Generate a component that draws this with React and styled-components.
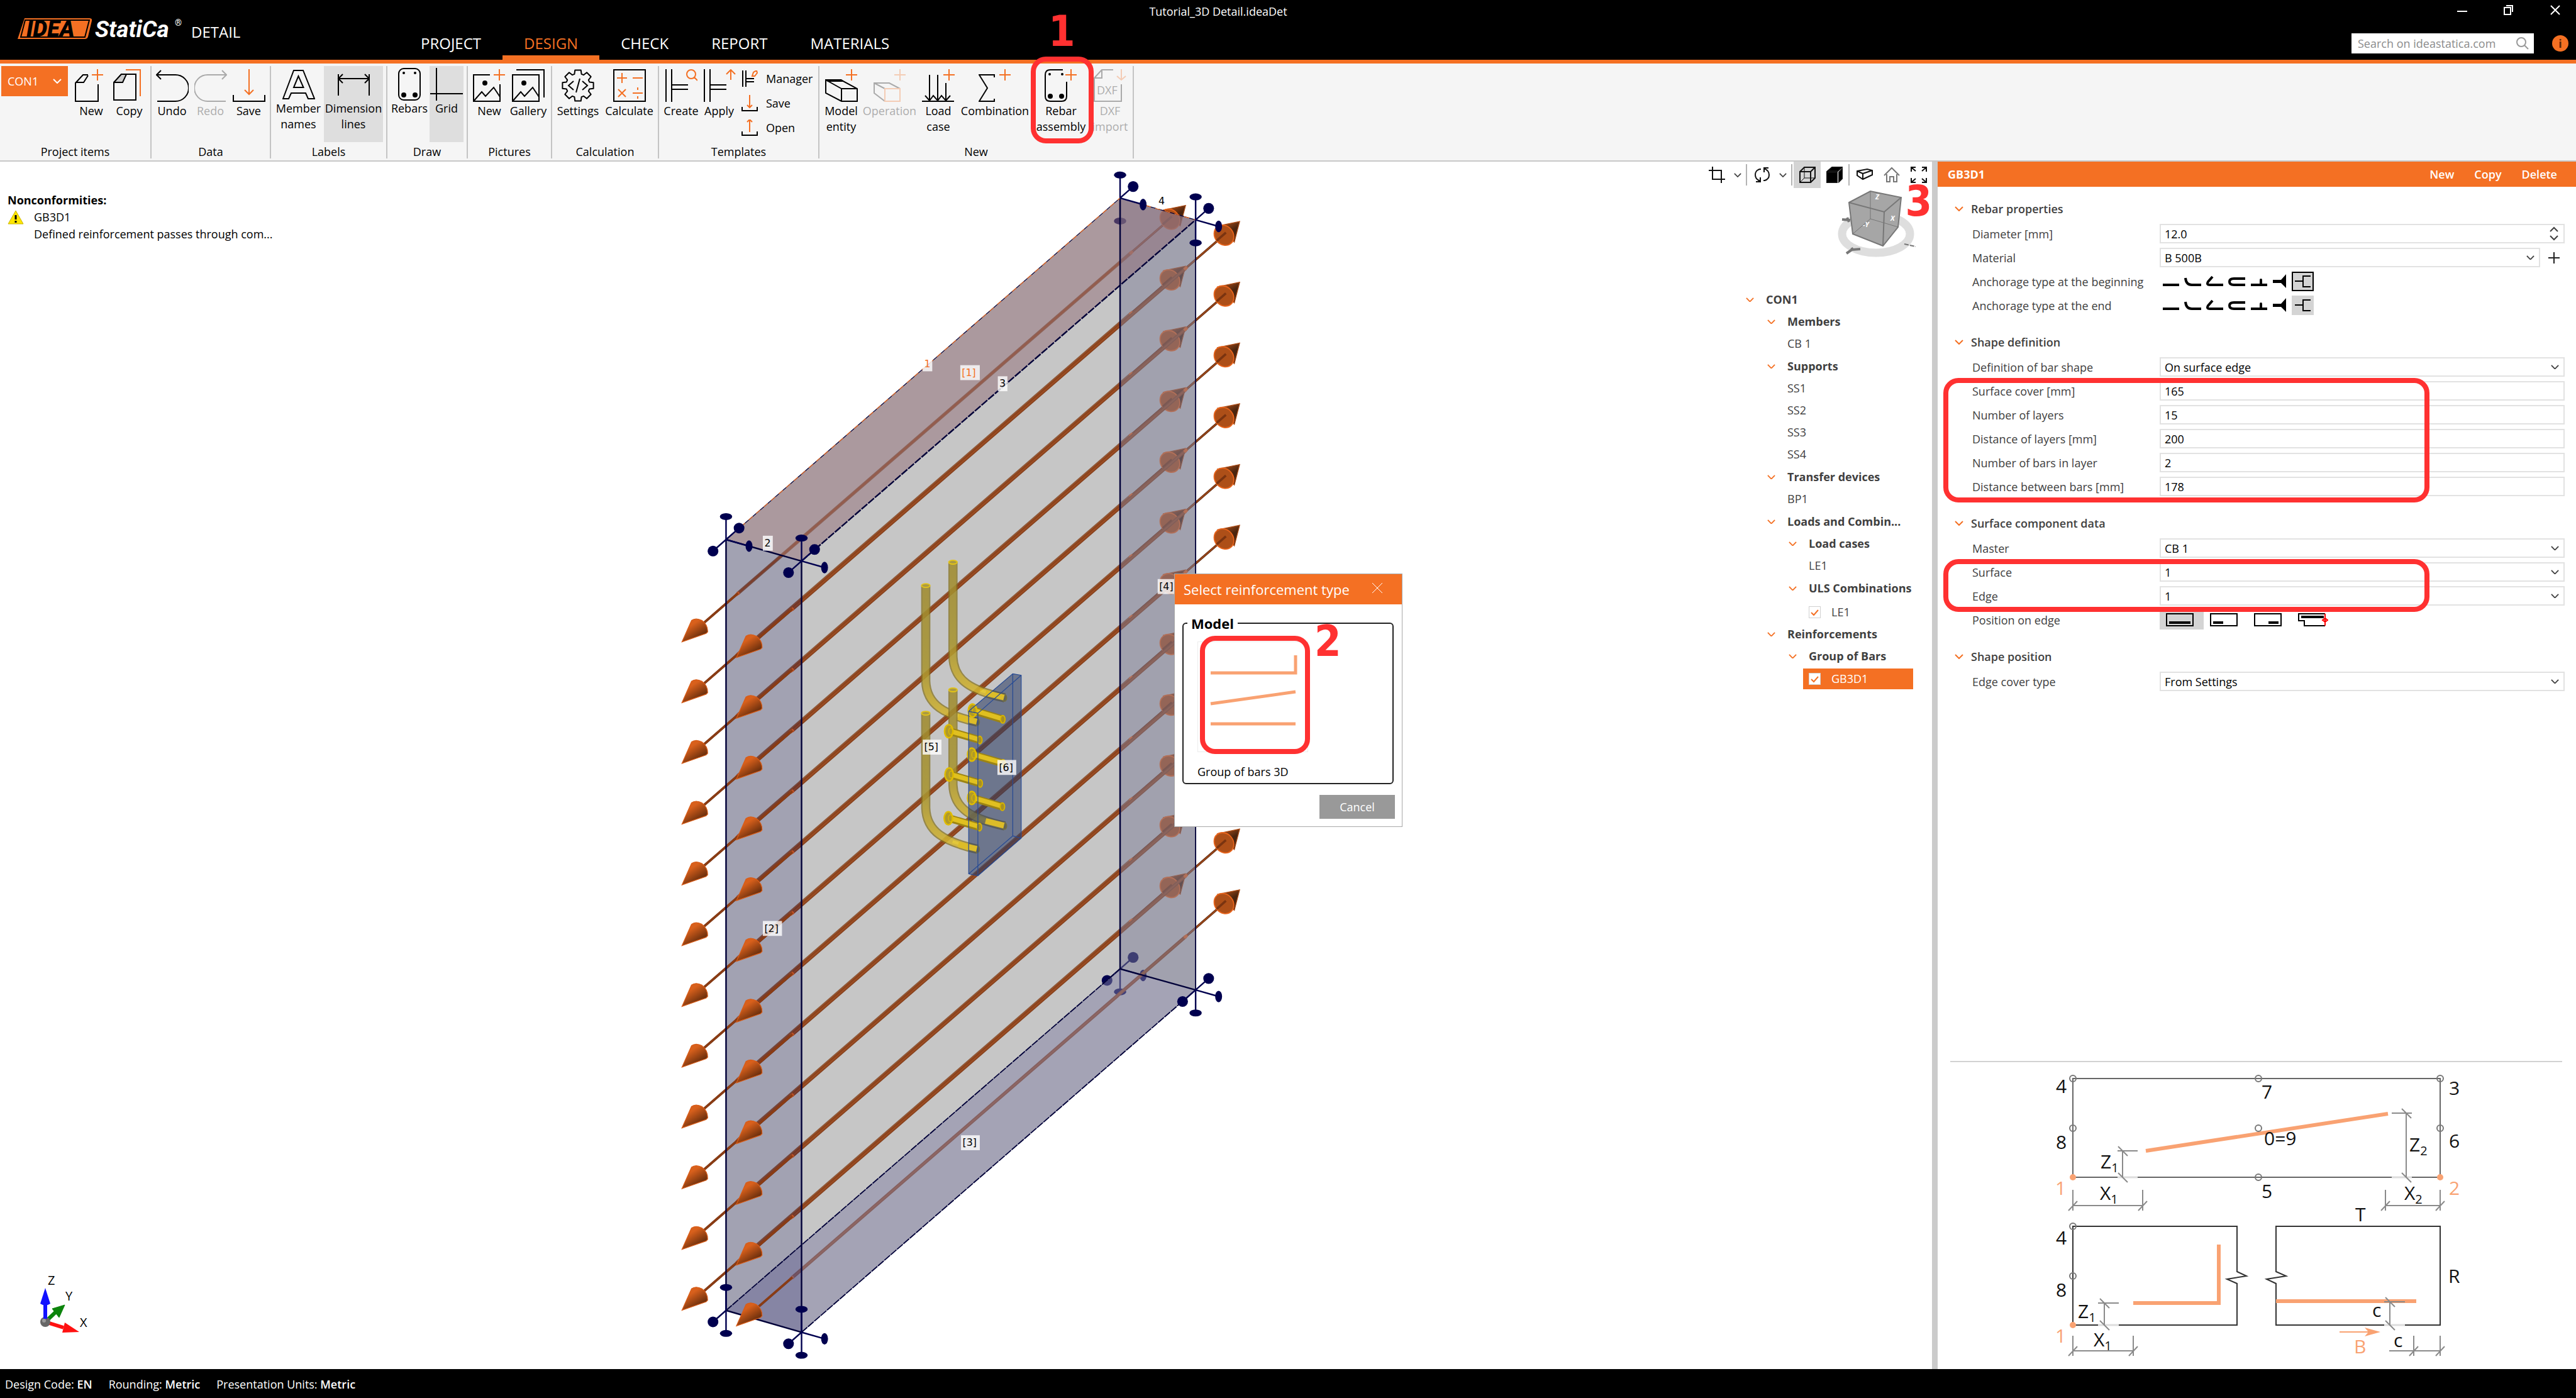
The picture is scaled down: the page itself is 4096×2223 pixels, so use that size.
import React from "react";
import styled, { createGlobalStyle } from "styled-components";

const orange = "#f47023";
const red = "#ff3131";
const peach = "#f9a272";

const GlobalStyle = createGlobalStyle`
  * {
    box-sizing: border-box;
  }
  html, body, #root {
    height: 100%;
    margin: 0;
  }
  body, button, input, select {
    font-family: "Open Sans", "Noto Sans", sans-serif;
    font-size: 18px;
    color: #000;
  }
  button {
    padding: 0;
    border: 0;
    background: none;
  }
  ul {
    list-style: none;
    margin: 0;
    padding: 0;
  }
`;

const Page = styled.div`
  display: flex;
  flex-direction: column;
  height: 100vh;
  background: #fff;
  overflow: hidden;
`;

/* ---------- header ---------- */

const Header = styled.header`
  display: grid;
  grid-template-columns: 635px 1fr auto;
  grid-template-rows: 36px 59px;
  height: 101px;
  flex: none;
  background: #000;
  color: #fff;
  border-bottom: 6px solid ${orange};
`;

const Brand = styled.div`
  grid-column: 1;
  grid-row: 1 / 3;
  display: flex;
  align-items: flex-start;
  padding: 20px 0 0 28px;
`;

const LogoSvg = styled.svg`
  display: block;
  width: 266px;
  height: 48px;
`;

const Module = styled.span`
  padding-left: 10px;
  line-height: 62px;
  font-size: 24px;
`;

const Title = styled.div`
  grid-column: 1 / 4;
  grid-row: 1;
  text-align: center;
  padding-right: 222px;
  line-height: 36px;
`;

const WindowButtons = styled.div`
  grid-column: 3;
  grid-row: 1;
  display: flex;
  justify-content: flex-end;
  padding-right: 4px;

  button {
    width: 58px;
    height: 36px;
    margin-left: 16px;
    color: #fff;
  }
`;

const Tabs = styled.nav`
  grid-column: 2;
  grid-row: 2;
  display: flex;
  align-items: flex-end;
`;

const Tab = styled.a`
  padding: 0 34px;
  height: 48px;
  line-height: 44px;
  font-size: 24px;
  text-decoration: none;
  color: ${(props) => (props.$active ? orange : "#fff")};
  border-bottom: 7px solid ${(props) => (props.$active ? orange : "transparent")};
`;

const HeaderTools = styled.div`
  grid-column: 3;
  grid-row: 2;
  display: flex;
  align-items: flex-start;
  padding: 17px 12px 0 0;
`;

const SearchBox = styled.label`
  display: flex;
  align-items: center;
  width: 290px;
  height: 32px;
  margin-right: 29px;
  padding: 0 8px 0 10px;
  background: #fff;

  input {
    flex: 1;
    min-width: 0;
    padding: 0;
    border: 0;
    outline: 0;
  }
  input::placeholder {
    color: #8c8c8c;
    opacity: 1;
  }
`;

const InfoButton = styled.button`
  width: 26px;
  height: 26px;
  margin-top: 3px;
  border-radius: 50%;
  background: ${orange};
  font-weight: 700;
  line-height: 26px;
  color: #5c2408;
`;

/* ---------- ribbon ---------- */

const Ribbon = styled.div`
  display: flex;
  height: 156px;
  flex: none;
  padding: 4px 0 3px;
  background: #f5f5f5;
  border-bottom: 2px solid #c8c8c8;
`;

const Group = styled.section`
  display: flex;
  flex-direction: column;
  width: ${(props) => props.$width}px;
  border-right: 2px solid #c4c4c4;
`;

const GroupBody = styled.div`
  display: flex;
  flex: 1;
  padding: 0 0 0 ${(props) => props.$pad}px;
`;

const GroupName = styled.div`
  line-height: 22px;
  text-align: center;
`;

const ItemPicker = styled.button`
  display: flex;
  align-items: center;
  justify-content: space-between;
  width: 106px;
  height: 48px;
  margin-right: 7px;
  padding: 0 10px;
  background: ${orange};
  color: #fff;
`;

const Tool = styled.button`
  position: relative;
  display: flex;
  flex-direction: column;
  align-items: center;
  width: ${(props) => props.$width}px;
  height: 121px;
  padding-top: ${(props) => (props.$toggle ? 3 : 5)}px;
  background: ${(props) => (props.$pressed ? "#dedede" : "none")};
  opacity: ${(props) => (props.disabled ? 0.3 : 1)};
  color: #000;
  line-height: 25px;

  svg {
    flex: none;
    margin-bottom: ${(props) => (props.$toggle ? 0 : 2)}px;
  }
`;

const SmallTools = styled.div`
  display: flex;
  flex-direction: column;
`;

const SmallTool = styled.button`
  display: flex;
  align-items: center;
  gap: 13px;
  height: 39px;
  padding: 0 0 0 4px;
`;

/* ---------- step marks ---------- */

const MarkBox = styled.span`
  position: absolute;
  border: 8px solid ${red};
  border-radius: 24px;
  pointer-events: none;
  z-index: 3;
`;

const ToolMark = styled(MarkBox)`
  top: -15px;
  left: 0;
  width: 100px;
  height: 138px;
`;

const TileMark = styled(MarkBox)`
  inset: -10px -4px -4px 3px;
`;

const RowsMark = styled(MarkBox)`
  top: -5px;
  bottom: -10px;
  left: -46px;
  width: 773px;
`;

const Step = styled.span`
  position: absolute;
  z-index: 3;
  color: ${red};
  font-family: "DejaVu Sans Condensed", "DejaVu Sans", sans-serif;
  font-weight: 700;
  font-size: 68px;
  line-height: 70px;
  pointer-events: none;
`;

const ToolStep = styled(Step)`
  top: -90px;
  left: 28px;
`;

const TileStep = styled(Step)`
  top: -36px;
  left: 185px;
`;

const ViewStep = styled(Step)`
  top: 28px;
  right: 0;
`;

/* ---------- 3D view ---------- */

const Main = styled.main`
  display: flex;
  flex: 1;
  min-height: 0;
`;

const Viewport = styled.section`
  position: relative;
  display: flex;
  justify-content: space-between;
  flex: 1;
  min-width: 0;
  overflow: hidden;
`;

const Scene = styled.svg`
  position: absolute;
  inset: 0;
  width: 100%;
  height: 100%;
`;

const AxisSvg = styled.svg`
  position: absolute;
  left: 50px;
  bottom: 40px;
`;

const Messages = styled.div`
  position: relative;
  padding: 48px 0 0 12px;
  line-height: 27px;
`;

const MessageTitle = styled.div`
  font-weight: 700;
`;

const Message = styled.div`
  display: grid;
  grid-template-columns: 42px auto;
  align-items: center;

  p {
    grid-column: 2;
    margin: 0;
  }
`;

const Side = styled.div`
  position: relative;
  display: flex;
  flex-direction: column;
  align-items: flex-end;
`;

const ViewTools = styled.div`
  display: flex;
  align-items: center;
  height: 42px;
`;

const ViewTool = styled.button`
  display: grid;
  place-items: center;
  width: ${(props) => (props.$narrow ? 24 : 43)}px;
  height: 42px;
  background: ${(props) => (props.$pressed ? "#d4d4d4" : "none")};
`;

const Divider = styled.span`
  width: 2px;
  height: 34px;
  margin: 0 2px 0 1px;
  background: #b4b4b4;
`;

const CubeSvg = styled.svg`
  display: block;
  margin: 0 22px 50px 0;
`;

const Tree = styled.ul`
  width: 272px;
  margin-right: 30px;
  color: #404040;
  line-height: 35px;
`;

const Branch = styled.ul`
  padding-left: 34px;
  padding-bottom: ${(props) => (props.$flat ? 1 : 0)}px;
`;

const TreeName = styled.div`
  display: flex;
  align-items: center;
  gap: 19px;
  height: 35px;
  padding-left: ${(props) => (props.$leaf ? 4 : 6)}px;
  font-weight: ${(props) => (props.$leaf ? 400 : 700)};
  white-space: nowrap;
`;

const TreeRoot = styled(TreeName)`
  margin-left: -28px;
  padding-left: 34px;
`;

const CheckRow = styled.label`
  display: flex;
  align-items: center;
  gap: 17px;
  height: 33px;
  margin: ${(props) => (props.$selected ? "2px 0 0 -5px" : "4px 0 1px")};
  padding-left: ${(props) => (props.$selected ? 9 : 4)}px;
  background: ${(props) => (props.$selected ? orange : "none")};
  color: ${(props) => (props.$selected ? "#fff" : "inherit")};
`;

const Tick = styled.span`
  display: grid;

  input, svg {
    grid-area: 1 / 1;
    width: 19px;
    height: 19px;
    margin: 0;
  }
  input {
    appearance: none;
    background: #fff;
    border: 1px solid #d0d0d0;
  }
  svg {
    pointer-events: none;
  }
`;

/* ---------- dialog ---------- */

const Dialog = styled.div`
  position: absolute;
  top: 655px;
  left: 1867px;
  width: 363px;
  border: 1px solid #a8a8a8;
  background: #fff;
`;

const DialogHead = styled.div`
  display: flex;
  align-items: center;
  justify-content: space-between;
  height: 48px;
  padding: 0 30px 0 14px;
  background: ${orange};
  color: #fff;
  font-size: 22px;
`;

const DialogGroup = styled.fieldset`
  height: 268px;
  margin: 18px 13px 0 12px;
  padding: 17px 0 0 22px;
  border: 2px solid #222;
  border-radius: 6px;

  legend {
    margin-left: -16px;
    padding: 0 6px;
    font-size: 22px;
    font-weight: 700;
    line-height: 24px;
  }
`;

const Tile = styled.button`
  position: relative;
  display: block;
  width: 176px;
  height: 176px;
  border: 1px solid #ececec;
`;

const TileName = styled.div`
  padding-top: 18px;
  line-height: 26px;
`;

const Cancel = styled.button`
  display: block;
  width: 120px;
  height: 38px;
  margin: 17px 11px 12px auto;
  background: #999;
  color: #fff;
`;

/* ---------- property panel ---------- */

const Panel = styled.aside`
  display: flex;
  flex-direction: column;
  width: 1024px;
  flex: none;
  border-left: 9px solid #cbcbcb;
`;

const PanelHead = styled.div`
  display: flex;
  align-items: center;
  gap: 32px;
  height: 40px;
  padding: 0 30px 0 16px;
  background: ${orange};
  color: #fff;

  strong {
    flex: 1;
    font-weight: 700;
  }
  button {
    color: #fff;
    font-weight: 600;
  }
`;

const PanelBody = styled.div`
  flex: 1;
  padding: 20px 18px 0 55px;
  color: #404040;
`;

const Section = styled.section`
  padding-bottom: 28px;

  h2 {
    display: flex;
    align-items: center;
    gap: 12px;
    height: 30px;
    margin: 0 0 9px -28px;
    font-size: 18px;
    font-weight: 600;
  }
`;

const Rows = styled.div`
  position: relative;
  display: grid;
  gap: 7px;

  & + & {
    margin-top: 7px;
  }
`;

const Row = styled.div`
  display: grid;
  grid-template-columns: 298px 1fr;
  align-items: center;
  height: 31px;
`;

const Control = styled.div`
  display: flex;
  align-items: center;
  height: 31px;
`;

const Field = styled.span`
  display: grid;
  flex: 1;
  align-items: center;

  input, select {
    grid-area: 1 / 1;
    appearance: none;
    width: 100%;
    height: 31px;
    padding: 0 6px;
    border: 2px solid #e2e2e2;
    border-radius: 0;
    background: #fff;
  }
  svg {
    grid-area: 1 / 1;
    justify-self: end;
    margin-right: 9px;
    pointer-events: none;
  }
`;

const AddButton = styled.button`
  display: grid;
  place-items: center;
  width: 35px;
  margin-left: 4px;
`;

const Option = styled.button`
  display: grid;
  place-items: center;
  width: 35px;
  height: 31px;
  background: ${(props) => (props.$pressed ? "#d4d4d4" : "none")};
  border: ${(props) => (props.$focused ? "2px solid #000" : "0")};
`;

const PositionOption = styled(Option)`
  width: 70px;
  justify-items: start;
  padding-left: 10px;
`;

const Figure = styled.figure`
  display: flex;
  justify-content: center;
  margin: 0 22px 0 20px;
  border-top: 2px solid #d2d2d2;
`;

/* ---------- status bar ---------- */

const Status = styled.footer`
  display: flex;
  align-items: center;
  gap: 26px;
  height: 46px;
  flex: none;
  padding: 2px 8px 0;
  background: #000;
  color: #fff;

  b {
    font-weight: 600;
  }
`;

/* ---------- icons ---------- */

function Chevron({ color = "#404040", size = 14 }) {
  return (
    <svg width={size} height={size / 2 + 1} viewBox="0 0 14 8" fill="none" stroke={color} strokeWidth="2">
      <path d="M1 1l6 6 6-6" />
    </svg>
  );
}

const Plus = ({ x = 42, y = 9 }) => <path d={`M${x - 9} ${y}h18M${x} ${y - 9}v18`} stroke={orange} />;

const gear = () => {
  const pts = [];
  for (let i = 0; i < 8; i++) {
    [[-0.3, 19], [-0.19, 25], [0.19, 25], [0.3, 19]].forEach(([d, r]) => {
      const a = (i * Math.PI) / 4 + d;
      pts.push(`${(26 + r * Math.sin(a)).toFixed(1)} ${(26 - r * Math.cos(a)).toFixed(1)}`);
    });
  }
  return `M${pts.join("L")}Z`;
};

const mountain = "M1 51L14 36L20 43L33 29L43 44";

const toolIcons = {
  page: (
    <>
      <path d="M37 24V51H1V22L13 9H21M21 10L14 21H1" />
      <Plus x={36} />
    </>
  ),
  copy: (
    <>
      <path d="M1 22L13 8H36V49H1ZM13 8V21H1" />
      <path d="M13 8H21L15 21H1Z" fill="#ccc" />
      <path d="M20 1H43V43" stroke={orange} />
    </>
  ),
  undo: <path d="M8 2L1 9L8 16M1 9H31A21 21 0 0 1 31 51H2" />,
  redo: <path d="M44 2L51 9L44 16M51 9H21A21 21 0 0 0 21 51H50" />,
  save: (
    <>
      <path d="M26 0V40M19 33L26 40L33 33" stroke={orange} />
      <path d="M1 41V51H51V41" />
    </>
  ),
  names: <path d="M1 49L18 4H33L51 49H41L37 40H14L10 49ZM25.500 13L18 31H33.500Z" />,
  dims: <path d="M2 10V44M51 10V44M2 17H51M9 10L2 17L9 24M44 10L51 17L44 24" />,
  rebars: (
    <>
      <rect x="9" y="1" width="34" height="50" rx="8" />
      <g fill="#000" stroke="none">
        <circle cx="17" cy="8" r="2" />
        <circle cx="35" cy="8" r="2" />
        <circle cx="17" cy="43" r="4" />
        <circle cx="35" cy="43" r="4" />
      </g>
    </>
  ),
  grid: <path d="M10 0V52M0 41H52" />,
  picture: (
    <>
      <path d="M27 9H1V51H43V24" />
      <path d={mountain} />
      <circle cx="19" cy="22" r="3" fill="#000" />
      <Plus />
    </>
  ),
  gallery: (
    <>
      <path d="M1 9H43V51H1ZM7 1H51V45" />
      <path d={mountain} />
      <circle cx="19" cy="22" r="3" fill="#000" />
    </>
  ),
  settings: (
    <>
      <path d={gear()} strokeLinejoin="round" />
      <path d="M19 19L11 26L19 33M33 19L41 26L33 33M29 15L23 37" />
    </>
  ),
  calculate: (
    <>
      <rect x="1" y="1" width="50" height="50" />
      <path d="M6 14H22M14 6V22M31 14H47M8 32L20 44M20 32L8 44M31 38H47M39 29V33M39 43V47" stroke={orange} />
    </>
  ),
  create: (
    <>
      <path d="M2 0V52M11 0V52M11 25H37M11 32H37" />
      <path d="M47 13L52 18M42 1A7 7 0 1 0 42 15A7 7 0 1 0 42 1" stroke={orange} />
    </>
  ),
  apply: (
    <>
      <path d="M2 0V52M11 0V52M11 25H37M11 32H37" />
      <path d="M44 17V1M37 8L44 1L51 8" stroke={orange} />
    </>
  ),
  entity: (
    <>
      <path d="M1 17H25L51 31V51H26L1 38ZM26 51V31H51M26 31L1 17" />
      <path d="M1 17H25L28 19H5Z" fill="#777" />
      <Plus />
    </>
  ),
  operation: (
    <>
      <path d="M18 51L1 38V22H25L42 31M18 31L1 22" />
      <path d="M18 31H42V51H18Z" stroke={orange} />
      <Plus />
    </>
  ),
  load: (
    <>
      <path d="M12 9V49M25 9V49M38 22V49M5 42L12 50L18 42L25 50L31 42L38 50L45 42M0 51H51" />
      <Plus x={43} />
    </>
  ),
  sum: (
    <>
      <path d="M25 13V9H1L14 30L1 51H25V47" />
      <Plus />
    </>
  ),
  rebar: (
    <>
      <path d="M29 1H9Q1 1 1 9V43Q1 51 9 51H27Q35 51 35 43V20" />
      <g fill="#000" stroke="none">
        <circle cx="8" cy="8" r="2" />
        <circle cx="28" cy="8" r="2" />
        <circle cx="9" cy="43" r="4" />
        <circle cx="27" cy="43" r="4" />
      </g>
      <Plus />
    </>
  ),
  dxf: (
    <>
      <path d="M31 1H13L1 14V51H44V24M13 1V14H1" />
      <path d="M44 0V17M37 11L44 17L51 11" stroke={orange} />
      <text x="5" y="40" fontSize="18" fill="#000" stroke="none">DXF</text>
    </>
  ),
};

function ToolIcon({ name }) {
  return (
    <svg width="52" height="52" viewBox="0 0 52 52" fill="none" stroke="#000" strokeWidth="2">
      {toolIcons[name]}
    </svg>
  );
}

const smallIcons = {
  manager: (
    <>
      <path d="M2 0V26M7 0V26M7 13H20M7 18H20" />
      <path d="M17 9L19 3L24 0L25 4L21 9Z" stroke={orange} />
    </>
  ),
  save: (
    <>
      <path d="M13 0V20M9 16L13 20L17 16" stroke={orange} />
      <path d="M1 19V25H25V19" />
    </>
  ),
  open: (
    <>
      <path d="M13 20V0M9 4L13 0L17 4" stroke={orange} />
      <path d="M1 19V25H25V19" />
    </>
  ),
};

function SmallIcon({ name }) {
  return (
    <svg width="26" height="26" viewBox="0 0 26 26" fill="none" stroke="#000" strokeWidth="2">
      {smallIcons[name]}
    </svg>
  );
}

const viewIcons = {
  crop: <path d="M6 0V20H26M0 6H20V26" />,
  refresh: <path d="M3 24H10V17M10 23Q2 20 2 13Q2 6 9 4H11M23 2H16V9M16 3Q24 6 24 13Q24 20 17 22H15" />,
  wire: (
    <>
      <path d="M1 8H18V25H1ZM1 8L8 1H25V18L18 25M18 8L25 1" />
      <path d="M8 1V18H25M8 18L1 25" strokeWidth="1" />
    </>
  ),
  solid: (
    <>
      <path d="M1 9H17V25H1Z" fill="#000" />
      <path d="M2 7L9 1H25L18 7Z" fill="#000" />
      <path d="M20 24V9L25 4V19Z" fill="#000" />
    </>
  ),
  box: <path d="M1 7L17 4L25 6V13L10 20L1 14ZM10 20V11L1 7M10 11L25 6" />,
  home: <path d="M1 14L13 2L25 14M5 12V24H10V16H16V24H21V12" stroke="#777" />,
  expand: <path d="M1 8V1H8M18 1H25V8M25 18V25H18M8 25H1V18M1 1L8 7M25 1L18 7M25 25L18 19M1 25L8 19" />,
};

function ViewIcon({ name }) {
  return (
    <svg width="26" height="26" viewBox="0 0 26 26" fill="none" stroke="#111" strokeWidth="2">
      {viewIcons[name]}
    </svg>
  );
}

const anchorIcons = [
  <path d="M1 17H27" />,
  <path d="M2 6Q3 17 12 17H27" />,
  <path d="M10 4L3 12Q0 17 6 17H27" />,
  <path d="M27 7H9Q2 7 2 12T9 17H27" />,
  <>
    <path d="M1 17H27M17 17V10" />
    <circle cx="17" cy="9" r="2" fill="#000" stroke="none" />
  </>,
  <path d="M1 9H14L22 0V22L14 14H1Z" fill="#000" stroke="none" />,
  <path d="M1 11H14M26 3H14V20H26" strokeWidth="2" />,
];

const positionIcons = [
  <path d="M5 15H39" strokeWidth="4" />,
  <path d="M5 15H21" strokeWidth="4" />,
  <path d="M23 15H39" strokeWidth="4" />,
];

/* ---------- header parts ---------- */

function Logo() {
  return (
    <LogoSvg viewBox="0 0 266 48">
      <path d="M11 9H114Q119 9 118 13L112 38Q111 42 107 42H0Z" fill={orange} />
      <path d="M12 12H114L107 39H5Z" fill="none" stroke="#000" strokeWidth="2" />
      <g fontFamily="Roboto, sans-serif" fontStyle="italic">
        <text x="14" y="38" fontSize="36" fontWeight="900" fill="#000">IDEA</text>
        <text x="123" y="39" fontSize="37" fontWeight="700" fill="#fff">StatiCa</text>
      </g>
      <text x="250" y="21" fontSize="14" fill="#fff" fontFamily="Roboto, sans-serif">®</text>
    </LogoSvg>
  );
}

function TopBar() {
  const tabs = ["PROJECT", "DESIGN", "CHECK", "REPORT", "MATERIALS"];
  return (
    <Header>
      <Title>Tutorial_3D Detail.ideaDet</Title>
      <Brand>
        <Logo />
        <Module>DETAIL</Module>
      </Brand>
      <WindowButtons>
        <button aria-label="Minimize">
          <svg width="18" height="18" fill="none" stroke="#fff" strokeWidth="2"><path d="M1 11H17" /></svg>
        </button>
        <button aria-label="Restore">
          <svg width="18" height="18" fill="none" stroke="#fff" strokeWidth="2"><path d="M2 5H12V16H2ZM5 2H15V12" /></svg>
        </button>
        <button aria-label="Close">
          <svg width="18" height="18" fill="none" stroke="#fff" strokeWidth="2"><path d="M2 2L16 16M16 2L2 16" /></svg>
        </button>
      </WindowButtons>
      <Tabs>
        {tabs.map((name) => (
          <Tab key={name} href="#" $active={name === "DESIGN"}>{name}</Tab>
        ))}
      </Tabs>
      <HeaderTools>
        <SearchBox>
          <input type="search" aria-label="Search" placeholder="Search on ideastatica.com" />
          <svg width="20" height="20" fill="none" stroke="#999" strokeWidth="2">
            <circle cx="8" cy="8" r="7" />
            <path d="M13 13L19 19" />
          </svg>
        </SearchBox>
        <InfoButton>i</InfoButton>
      </HeaderTools>
    </Header>
  );
}

const ribbonGroups = [
  {
    name: "Project items", width: 241, pad: 2, picker: "CON1",
    tools: [["page", "New", 60], ["copy", "Copy", 61]],
  },
  {
    name: "Data", width: 190, pad: 2,
    tools: [["undo", "Undo", 61], ["redo", "Redo", 61, { disabled: true }], ["save", "Save", 61]],
  },
  {
    name: "Labels", width: 185, pad: 3,
    tools: [["names", "Member names", 81, { toggle: true }], ["dims", "Dimension lines", 94, { toggle: true, pressed: true }]],
  },
  {
    name: "Draw", width: 128, pad: 3,
    tools: [["rebars", "Rebars", 64, { toggle: true }], ["grid", "Grid", 54, { toggle: true, pressed: true }]],
  },
  {
    name: "Pictures", width: 134, pad: 3,
    tools: [["picture", "New", 62], ["gallery", "Gallery", 62]],
  },
  {
    name: "Calculation", width: 170, pad: 5,
    tools: [["settings", "Settings", 72], ["calculate", "Calculate", 91]],
  },
  {
    name: "Templates", width: 255, pad: 6, small: true,
    tools: [["create", "Create", 58], ["apply", "Apply", 63]],
  },
  {
    name: "New", width: 500, pad: 2,
    tools: [
      ["entity", "Model entity", 65], ["operation", "Operation", 89, { disabled: true }],
      ["load", "Load case", 66], ["sum", "Combination", 114],
      ["rebar", "Rebar assembly", 96, { step: "1" }], ["dxf", "DXF import", 60, { disabled: true }],
    ],
  },
];

function RibbonBar() {
  return (
    <Ribbon>
      {ribbonGroups.map((group) => (
        <Group key={group.name} $width={group.width}>
          <GroupBody $pad={group.pad}>
            {group.picker && (
              <ItemPicker>
                {group.picker} <Chevron color="#fff" />
              </ItemPicker>
            )}
            {group.tools.map(([icon, label, width, opts = {}]) => (
              <Tool key={label} $width={width} $toggle={opts.toggle} $pressed={opts.pressed} disabled={opts.disabled}>
                <ToolIcon name={icon} />
                {label.split(" ").map((word) => <span key={word}>{word}</span>)}
                {opts.step && <ToolMark />}
                {opts.step && <ToolStep>{opts.step}</ToolStep>}
              </Tool>
            ))}
            {group.small && (
              <SmallTools>
                <SmallTool><SmallIcon name="manager" />Manager</SmallTool>
                <SmallTool><SmallIcon name="save" />Save</SmallTool>
                <SmallTool><SmallIcon name="open" />Open</SmallTool>
              </SmallTools>
            )}
          </GroupBody>
          <GroupName>{group.name}</GroupName>
        </Group>
      ))}
    </Ribbon>
  );
}

/* ---------- model drawing ---------- */

const navy = "#00004f";
const layers = Array.from({ length: 12 }, (_, i) => i * 158.5);

// a support has a stem and a disc for each direction that it holds
const directions = {
  up: [0, -60, 16, 9],
  down: [0, 60, 16, 9],
  back: [34, -30, 14, 14],
  front: [-34, 30, 14, 14],
  side: [60, 17, 9, 15],
};

function Support({ x, y, dirs }) {
  return (
    <g stroke={navy} strokeWidth="4" fill={navy}>
      {dirs.split(" ").map((dir) => {
        const [dx, dy, rx, ry] = directions[dir];
        return (
          <g key={dir}>
            <path d={`M${x} ${y}l${dx} ${dy}`} />
            <ellipse cx={x + dx} cy={y + dy} rx={rx} ry={ry} stroke="none" />
          </g>
        );
      })}
    </g>
  );
}

function Bar({ x, y, back }) {
  // y is the height of the left tip; bars rise 0.8667 for each unit
  const at = (px) => `${px} ${(y - (px - x) * 0.8667).toFixed(1)}`;
  const inner = x + 145;
  const outer = x + 1172;
  return (
    <g>
      <path d={`M${at(x + 40)}L${at(inner)}M${at(outer)}L${at(x + 1280)}`} stroke="#6a2f12" strokeWidth="6" />
      <path d={`M${at(x + 40)}L${at(inner)}M${at(outer)}L${at(x + 1280)}`} stroke="#b0521c" strokeWidth="2" />
      <path d={`M${at(inner)}L${at(outer)}`} stroke={back ? "#8c5a3c" : "#86401c"} strokeWidth="9" />
      <path d={`M${at(inner)}L${at(outer)}`} stroke="#9a4c22" strokeWidth="4" />
      <path d={`M${at(inner - 4)}L${at(inner + 4)}M${at(outer - 4)}L${at(outer + 4)}`} stroke="#e8641c" strokeWidth="8" />
    </g>
  );
}

function LeftCone({ x, y }) {
  return (
    <path
      transform={`translate(${x} ${y})`}
      d="M0 0L25 -56Q36 -64 52 -56Q68 -44 67 -26L63 -22Z"
      fill="url(#cone)"
      stroke="#d85c18"
      strokeWidth="2"
    />
  );
}

function RightCone({ x, y }) {
  return (
    <g transform={`translate(${x} ${y})`}>
      <path d="M0 0L-58 12L-14 54Z" fill="url(#tip)" stroke="#b0501a" strokeWidth="2" />
      <ellipse cx="-41" cy="36" rx="24" ry="28" transform="rotate(-40 -41 36)" fill="#ad4f18" stroke="#e8641c" strokeWidth="3" />
      <path d="M-60 50L-36 29" stroke="#7a3410" strokeWidth="6" />
    </g>
  );
}

const hooks = [[750, 1041, 247, 1395], [679, 1102, 249, 1458], [750, 1374, 248, 1729], [679, 1435, 247, 1790]];
const studs = [[803, 1428, 77], [741, 1482, 79], [801, 1543, 80], [742, 1595, 79], [801, 1656, 78], [740, 1709, 79]];

function Hook({ x, y, straight, end }) {
  const bend = y + straight;
  const d = `M${x} ${y}V${bend}C${x + 2} ${bend + 62} ${x + 48} ${bend + 88} ${x + 135} ${end}`;
  return (
    <g fill="none">
      <path d={d} stroke="#857220" strokeWidth="24" opacity="0.85" />
      <path d={d} stroke="url(#steel)" strokeWidth="17" />
      <path d={`M${x + 70} ${end - 20}L${x + 133} ${end - 1}`} stroke="#e6c828" strokeWidth="8" />
      <ellipse cx={x} cy={y} rx="11" ry="5" fill="#a89430" stroke="#e8c400" strokeWidth="3" />
      <ellipse cx={x + 134} cy={end} rx="6" ry="9" fill="#a89430" stroke="#d8b400" strokeWidth="3" />
    </g>
  );
}

function Stud({ x, y, length }) {
  return (
    <g>
      <path d={`M${x} ${y}l${length} 23`} stroke="#9c8414" strokeWidth="20" />
      <path d={`M${x} ${y - 1}l${length} 23`} stroke="#e0c020" strokeWidth="12" />
      <ellipse cx={x - 2} cy={y} rx="11" ry="17" fill="#b09a28" stroke="#e0bc00" strokeWidth="4" />
      <ellipse cx={x + 3} cy={y} rx="5" ry="9" fill="none" stroke="#e0bc00" strokeWidth="2" />
      <ellipse cx={x + length} cy={y + 23} rx="6" ry="10" fill="#a89020" stroke="#d8b400" strokeWidth="3" />
    </g>
  );
}

const sceneLabels = [
  ["1", 671, 504, 25, orange], ["[1]", 769, 527, 51, orange], ["3", 867, 556, 25], ["2", 254, 972, 26],
  ["4", 1282, 80, 25], ["[4]", 1284, 1085, 50], ["[5]", 671, 1504, 49], ["[6]", 866, 1557, 49],
  ["[2]", 254, 1977, 50], ["[3]", 771, 2536, 49],
];

function Model() {
  return (
    <Scene viewBox="-1736 -4 5040 3150" fill="none">
      <defs>
        <linearGradient id="cone" x1="0" y1="0" x2="0.7" y2="1">
          <stop offset="0.35" stopColor="#d8601c" />
          <stop offset="1" stopColor="#4a2008" />
        </linearGradient>
        <linearGradient id="tip" x1="0" y1="0" x2="0.6" y2="1">
          <stop offset="0" stopColor="#c85a1c" />
          <stop offset="0.6" stopColor="#4a240e" />
        </linearGradient>
        <linearGradient id="steel" x1="0" y1="0" x2="0" y2="1">
          <stop offset="0" stopColor="#a08c30" />
          <stop offset="0.6" stopColor="#a89430" />
          <stop offset="1" stopColor="#d8b830" />
        </linearGradient>
      </defs>

      <path d="M158 982L1186 91L1383 148V2157L355 3050L158 2993Z" fill="#c6c6c6" />
      <g>
        {layers.map((dy) => <Bar key={dy} x={43} y={1249 + dy} back />)}
        {layers.map((dy) => <RightCone key={dy} x={1357} y={110 + dy} />)}
        <Support x={1186} y={91} dirs="down" />
        <Support x={1186} y={2102} dirs="back front down side" />
      </g>
      {layers.map((dy) => <Bar key={dy} x={185} y={1290 + dy} />)}

      <path d="M1186 91L1383 148V2157L1186 2102Z" fill="#7c7c96" opacity="0.5" />
      <path d="M158 2993L1186 2102L1383 2157L355 3050Z" fill="#8280a4" opacity="0.5" />
      <path d="M158 982L355 1038V3050L158 2993Z" fill="#000057" opacity="0.18" />
      <path d="M158 982L1186 91L1383 148L355 1038Z" fill="#906c76" opacity="0.5" />

      {layers.map((dy) => <path key={dy} d={`M83 ${1214 + dy}l106 -92`} stroke="#8a3c14" strokeWidth="6" />)}
      {layers.map((dy) => <path key={dy} d={`M225 ${1255 + dy}l106 -92`} stroke="#8a3c14" strokeWidth="6" />)}

      <g stroke="#000038" strokeWidth="4">
        <path d="M158 982V2993M355 1038V3050M1186 91V2102" />
        <path d="M1383 148V2157" strokeWidth="3" />
        <path d="M158 982L355 1038M158 2993L355 3050M1186 2102L1383 2157" />
        <path d="M158 2993L1186 2102M355 3050L1383 2157" strokeWidth="3" strokeDasharray="20 2" />
        <path d="M355 1038L1383 148" strokeDasharray="20 3" />
        <path d="M158 982L1186 91L1383 148" strokeWidth="2" />
        <path d="M158 982L1186 91L1383 148" stroke={orange} strokeWidth="2" strokeDasharray="14 12" />
      </g>

      {layers.map((dy) => <LeftCone key={dy} x={43} y={1249 + dy} />)}
      {layers.map((dy) => <LeftCone key={dy} x={185} y={1290 + dy} />)}
      {layers.map((dy) => <RightCone key={dy} x={1498} y={152 + dy} />)}

      <Support x={1186} y={91} dirs="up back side" />
      <Support x={1383} y={148} dirs="up down back side" />
      <Support x={158} y={982} dirs="up back front side" />
      <Support x={355} y={1038} dirs="up back front side" />
      <Support x={1383} y={2157} dirs="down back front side" />
      <Support x={158} y={2993} dirs="up down front" />
      <Support x={355} y={3050} dirs="up down front side" />

      <g opacity="0.88">
        {hooks.map(([x, y, straight, end]) => <Hook key={y} x={x} y={y} straight={straight} end={end} />)}
      </g>
      <path d="M791 1430L906 1332L928 1336V1761L815 1859L791 1854Z" fill="#2c3c64" opacity="0.58" />
      {studs.map(([x, y, length]) => <Stud key={y} x={x} y={y} length={length} />)}
      {hooks.map(([x, , , end]) => (
        <path key={end} d={`M${x + 85} ${end - 13}L${x + 133} ${end - 1}`} stroke="#dcbc28" strokeWidth="15" />
      ))}
      <path d="M791 1430L906 1332L928 1336V1761L815 1859L791 1854ZM791 1430L815 1435V1859M815 1435L928 1336M906 1332V1755L791 1854M906 1755L928 1761" stroke="#264a94" strokeWidth="2" />

      <g fontFamily="DejaVu Sans, sans-serif" fontSize="26">
        {sceneLabels.map(([text, x, y, width, color = "#000"]) => (
          <g key={text}>
            <rect x={x} y={y} width={width} height="39" fill="#fff" opacity="0.8" />
            <text x={x + 4} y={y + 28} fill={color}>{text}</text>
          </g>
        ))}
      </g>
    </Scene>
  );
}

function Axes() {
  return (
    <AxisSvg width="110" height="130" viewBox="50 2005 110 130" fontSize="20">
      <path d="M72 2100L90 2083" stroke="#0c840c" strokeWidth="6" />
      <path d="M103 2073L83 2079L94 2093Z" fill="#0c840c" stroke="#0c840c" />
      <path d="M72 2100L101 2109" stroke="#f11" strokeWidth="6" />
      <path d="M126 2116L103 2101L99 2117Z" fill="#f11" />
      <circle cx="72" cy="2100" r="8" fill="#666" />
      <circle cx="70" cy="2098" r="3" fill="#999" />
      <path d="M72 2095V2070" stroke="#11f" strokeWidth="6" />
      <path d="M72 2046L64 2071Q72 2076 80 2071Z" fill="#11f" />
      <text x="76" y="2041">Z</text>
      <text x="104" y="2066">Y</text>
      <text x="127" y="2108">X</text>
    </AxisSvg>
  );
}

function ViewCube() {
  return (
    <CubeSvg width="130" height="110" viewBox="0 0 130 110">
      <ellipse cx="63" cy="73" rx="54" ry="30" fill="none" stroke="#dedede" strokeWidth="13" />
      <g fill="#a6a6a6" stroke="#777" strokeWidth="2">
        <path d="M20 23L54 5L103 15L98 62L74 92L26 73Z" />
        <path d="M20 23L76 38L103 15M76 38L74 92" fill="none" />
        <path d="M54 5V49L26 73M54 49L98 62" fill="none" strokeWidth="1" />
      </g>
      <g fill="#fff" fontSize="11" fontStyle="italic" fontWeight="700">
        <text x="42" y="62">-Y</text>
        <text x="62" y="18">Z</text>
        <text x="86" y="52">X</text>
      </g>
      <path d="M16 104L26 97M24 95L26 98L38 97M9 50L22 51M17 47L20 54" stroke="#777" strokeWidth="4" fill="none" />
      <path d="M108 89L126 93" stroke="#777" strokeWidth="2" strokeDasharray="7 2" />
    </CubeSvg>
  );
}

/* ---------- tree ---------- */

const treeData = [
  { name: "Members", leaves: ["CB 1"] },
  { name: "Supports", leaves: ["SS1", "SS2", "SS3", "SS4"] },
  { name: "Transfer devices", leaves: ["BP1"] },
  {
    name: "Loads and Combin...",
    groups: [{ name: "Load cases", leaves: ["LE1"] }, { name: "ULS Combinations", checks: ["LE1"] }],
  },
  { name: "Reinforcements", groups: [{ name: "Group of Bars", checks: ["GB3D1"], selected: true }] },
];

function TreeNode({ node }) {
  const { name, leaves = [], checks = [], groups = [], selected } = node;
  return (
    <li>
      <TreeName><Chevron color={orange} size={13} />{name}</TreeName>
      <Branch $flat={leaves.length > 0}>
        {leaves.map((leaf) => <li key={leaf}><TreeName $leaf>{leaf}</TreeName></li>)}
        {checks.map((check) => (
          <li key={check}>
            <CheckRow $selected={selected}>
              <Tick>
                <input type="checkbox" defaultChecked />
                <svg viewBox="0 0 19 19" fill="none" stroke={orange} strokeWidth="2"><path d="M4 10L8 14L15 6" /></svg>
              </Tick>
              {check}
            </CheckRow>
          </li>
        ))}
        {groups.map((group) => <TreeNode key={group.name} node={group} />)}
      </Branch>
    </li>
  );
}

function SelectDialog() {
  return (
    <Dialog role="dialog" aria-label="Select reinforcement type">
      <DialogHead>
        Select reinforcement type
        <button aria-label="Close">
          <svg width="18" height="18" fill="none" stroke="#fff" strokeWidth="1"><path d="M1 1L17 17M17 1L1 17" /></svg>
        </button>
      </DialogHead>
      <DialogGroup>
        <legend>Model</legend>
        <Tile aria-label="Group of bars 3D">
          <svg width="174" height="174" fill="none" stroke={peach} strokeWidth="5">
            <path d="M20 49H155V21M20 98L155 79M20 130H155" />
          </svg>
          <TileMark />
          <TileStep>2</TileStep>
        </Tile>
        <TileName>Group of bars 3D</TileName>
      </DialogGroup>
      <Cancel>Cancel</Cancel>
    </Dialog>
  );
}

function View() {
  return (
    <Viewport>
      <Model />
      <Axes />
      <Messages>
        <MessageTitle>Nonconformities:</MessageTitle>
        <Message>
          <svg width="26" height="23" viewBox="0 0 26 23">
            <path d="M13 1L25 22H1Z" fill="#ffe600" stroke="#c8b400" />
            <path d="M13 8V15M13 17V20" stroke="#000" strokeWidth="3" />
          </svg>
          <span>GB3D1</span>
          <p>Defined reinforcement passes through com...</p>
        </Message>
      </Messages>
      <Side>
        <ViewTools>
          <ViewTool aria-label="Crop"><ViewIcon name="crop" /></ViewTool>
          <ViewTool aria-label="Crop options" $narrow><Chevron size={12} /></ViewTool>
          <Divider />
          <ViewTool aria-label="Rotate"><ViewIcon name="refresh" /></ViewTool>
          <ViewTool aria-label="Rotate options" $narrow><Chevron size={12} /></ViewTool>
          <Divider />
          <ViewTool aria-label="Wireframe" $pressed><ViewIcon name="wire" /></ViewTool>
          <ViewTool aria-label="Solid"><ViewIcon name="solid" /></ViewTool>
          <Divider />
          <ViewTool aria-label="Perspective"><ViewIcon name="box" /></ViewTool>
          <ViewTool aria-label="Home"><ViewIcon name="home" /></ViewTool>
          <ViewTool aria-label="Zoom all"><ViewIcon name="expand" /></ViewTool>
        </ViewTools>
        <ViewStep>3</ViewStep>
        <ViewCube />
        <Tree>
          <li>
            <TreeRoot><Chevron color={orange} size={13} />CON1</TreeRoot>
            <ul>
              {treeData.map((node) => (
                <TopBranch key={node.name}><TreeNode node={node} /></TopBranch>
              ))}
            </ul>
          </li>
        </Tree>
      </Side>
      <SelectDialog />
    </Viewport>
  );
}

function TopBranch({ children }) {
  return <Branch as="ul">{children}</Branch>;
}

/* ---------- properties ---------- */

function InputRow({ label, value, spinner }) {
  const id = React.useId();
  return (
    <Row>
      <label htmlFor={id}>{label}</label>
      <Control>
        <Field>
          <input id={id} defaultValue={value} />
          {spinner && (
            <svg width="16" height="23" viewBox="0 0 16 23" fill="none" stroke="#404040" strokeWidth="2">
              <path d="M2 8L8 2L14 8M2 15L8 21L14 15" />
            </svg>
          )}
        </Field>
      </Control>
    </Row>
  );
}

function SelectRow({ label, value, add }) {
  const id = React.useId();
  return (
    <Row>
      <label htmlFor={id}>{label}</label>
      <Control>
        <Field>
          <select id={id} defaultValue={value}><option>{value}</option></select>
          <Chevron size={13} />
        </Field>
        {add && (
          <AddButton aria-label="Add material">
            <svg width="18" height="18" stroke="#222" strokeWidth="2"><path d="M0 9H18M9 0V18" /></svg>
          </AddButton>
        )}
      </Control>
    </Row>
  );
}

function AnchorRow({ label, focused }) {
  return (
    <Row>
      <span>{label}</span>
      <Control>
        {anchorIcons.map((icon, i) => (
          <Option key={i} aria-label={`${label} ${i + 1}`} $pressed={i === 6} $focused={i === 6 && focused}>
            <svg width="28" height="23" viewBox="0 0 28 23" fill="none" stroke="#000" strokeWidth="4">{icon}</svg>
          </Option>
        ))}
      </Control>
    </Row>
  );
}

function PositionRow() {
  return (
    <Row>
      <span>Position on edge</span>
      <Control>
        {positionIcons.map((icon, i) => (
          <PositionOption key={i} aria-label={`Position ${i + 1}`} $pressed={i === 0}>
            <svg width="44" height="21" fill="none" stroke="#000" strokeWidth="2">
              <rect x="1" y="1" width="42" height="19" />
              {icon}
            </svg>
          </PositionOption>
        ))}
        <PositionOption aria-label="Position 4">
          <svg width="48" height="21" fill="none" stroke="#000" strokeWidth="2">
            <path d="M43 1H1V12H10V20H43" />
            <path d="M5 6H41" strokeWidth="4" />
            <path d="M43 1V20M39 11L43 8L47 11L43 14Z" stroke="red" />
          </svg>
        </PositionOption>
      </Control>
    </Row>
  );
}

function SectionTitle({ children }) {
  return <h2><Chevron color={orange} size={14} />{children}</h2>;
}

// dimension line with slanted ticks on both ends
function Dim({ x1, y1, x2, y2 }) {
  const tick = (x, y) => (x1 === x2 ? `M${x - 7} ${y - 7}L${x + 8} ${y + 8}` : `M${x - 7} ${y + 8}L${x + 7} ${y - 7}`);
  return <path d={`M${x1} ${y1}L${x2} ${y2}${tick(x1, y1)}${tick(x2, y2)}`} stroke="#8a8a8a" />;
}

function Letter({ x, y, sub, children }) {
  return (
    <text x={x} y={y}>
      {children}
      {sub && <tspan dy="6" fontSize="20">{sub}</tspan>}
    </text>
  );
}

function ShapeDiagram() {
  return (
    <svg width="700" height="488" viewBox="0 0 700 488" fill="none" stroke="#444" strokeWidth="2">
      <path d="M58 26H642V183H58Z" stroke="#666" />
      <path d="M319 261H58V418H319V352L303 345L334 340L319 333Z" stroke="#333" />
      <path d="M381 261H642V418H381V352L366 345L397 340L381 333Z" stroke="#333" />
      <path d="M129 183H161M565 183H597M98 418H131M553 418H586" stroke="#ddd" strokeWidth="3" />
      <g stroke={peach} strokeWidth="6">
        <path d="M174 141L559 82" />
        <path d="M154 383H290V290M381 380H604" />
        <path d="M482 429H530" strokeWidth="2" />
      </g>
      <path d="M547 429L522 422L528 429L522 436Z" fill={peach} stroke="none" />
      <path d="M129 141H161M565 81H597M98 383H131M553 381H586" stroke="#8a8a8a" />
      <path d="M58 203V236M169 203V236M555 203V236M642 203V236M58 435V467M154 435V467M600 435V467M642 435V467M561 459H600" stroke="#8a8a8a" />
      <Dim x1={137} y1={141} x2={137} y2={183} />
      <Dim x1={588} y1={81} x2={588} y2={183} />
      <Dim x1={108} y1={383} x2={108} y2={418} />
      <Dim x1={562} y1={381} x2={562} y2={418} />
      <Dim x1={58} y1={228} x2={169} y2={228} />
      <Dim x1={555} y1={228} x2={642} y2={228} />
      <Dim x1={58} y1={459} x2={154} y2={459} />
      <Dim x1={600} y1={459} x2={642} y2={459} />
      <g stroke="#777">
        {[[58, 26], [353, 26], [642, 26], [58, 105], [353, 105], [642, 105], [353, 183], [58, 261], [58, 340]].map(([x, y]) => (
          <circle key={`${x}-${y}`} cx={x} cy={y} r="5" />
        ))}
      </g>
      <g fill={peach} stroke="none">
        <circle cx="58" cy="183" r="5" />
        <circle cx="642" cy="183" r="5" />
        <circle cx="58" cy="418" r="5" />
      </g>
      <g fill="#111" stroke="none" fontSize="30">
        <Letter x={31} y={49}>4</Letter>
        <Letter x={358} y={58}>7</Letter>
        <Letter x={656} y={52}>3</Letter>
        <Letter x={31} y={138}>8</Letter>
        <Letter x={362} y={132}>0=9</Letter>
        <Letter x={656} y={136}>6</Letter>
        <Letter x={102} y={169} sub="1">Z</Letter>
        <Letter x={593} y={142} sub="2">Z</Letter>
        <Letter x={101} y={219} sub="1">X</Letter>
        <Letter x={585} y={219} sub="2">X</Letter>
        <Letter x={358} y={216}>5</Letter>
        <Letter x={507} y={253}>T</Letter>
        <Letter x={31} y={290}>4</Letter>
        <Letter x={31} y={373}>8</Letter>
        <Letter x={66} y={407} sub="1">Z</Letter>
        <Letter x={91} y={452} sub="1">X</Letter>
        <Letter x={534} y={405}>c</Letter>
        <Letter x={655} y={351}>R</Letter>
        <Letter x={568} y={453}>c</Letter>
      </g>
      <g fill={peach} stroke="none" fontSize="30">
        <Letter x={30} y={211}>1</Letter>
        <Letter x={656} y={211}>2</Letter>
        <Letter x={30} y={446}>1</Letter>
        <Letter x={505} y={463}>B</Letter>
      </g>
    </svg>
  );
}

function Properties() {
  return (
    <Panel>
      <PanelHead>
        <strong>GB3D1</strong>
        <button>New</button>
        <button>Copy</button>
        <button>Delete</button>
      </PanelHead>
      <PanelBody>
        <Section>
          <SectionTitle>Rebar properties</SectionTitle>
          <Rows>
            <InputRow label="Diameter [mm]" value="12.0" spinner />
            <SelectRow label="Material" value="B 500B" add />
            <AnchorRow label="Anchorage type at the beginning" focused />
            <AnchorRow label="Anchorage type at the end" />
          </Rows>
        </Section>
        <Section>
          <SectionTitle>Shape definition</SectionTitle>
          <Rows>
            <SelectRow label="Definition of bar shape" value="On surface edge" />
          </Rows>
          <Rows>
            <RowsMark />
            <InputRow label="Surface cover [mm]" value="165" />
            <InputRow label="Number of layers" value="15" />
            <InputRow label="Distance of layers [mm]" value="200" />
            <InputRow label="Number of bars in layer" value="2" />
            <InputRow label="Distance between bars [mm]" value="178" />
          </Rows>
        </Section>
        <Section>
          <SectionTitle>Surface component data</SectionTitle>
          <Rows>
            <SelectRow label="Master" value="CB 1" />
          </Rows>
          <Rows>
            <RowsMark />
            <SelectRow label="Surface" value="1" />
            <SelectRow label="Edge" value="1" />
          </Rows>
          <Rows>
            <PositionRow />
          </Rows>
        </Section>
        <Section>
          <SectionTitle>Shape position</SectionTitle>
          <Rows>
            <SelectRow label="Edge cover type" value="From Settings" />
          </Rows>
        </Section>
      </PanelBody>
      <Figure>
        <ShapeDiagram />
      </Figure>
    </Panel>
  );
}

export default function App() {
  return (
    <Page>
      <GlobalStyle />
      <TopBar />
      <RibbonBar />
      <Main>
        <View />
        <Properties />
      </Main>
      <Status>
        <span>Design Code: <b>EN</b></span>
        <span>Rounding: <b>Metric</b></span>
        <span>Presentation Units: <b>Metric</b></span>
      </Status>
    </Page>
  );
}
